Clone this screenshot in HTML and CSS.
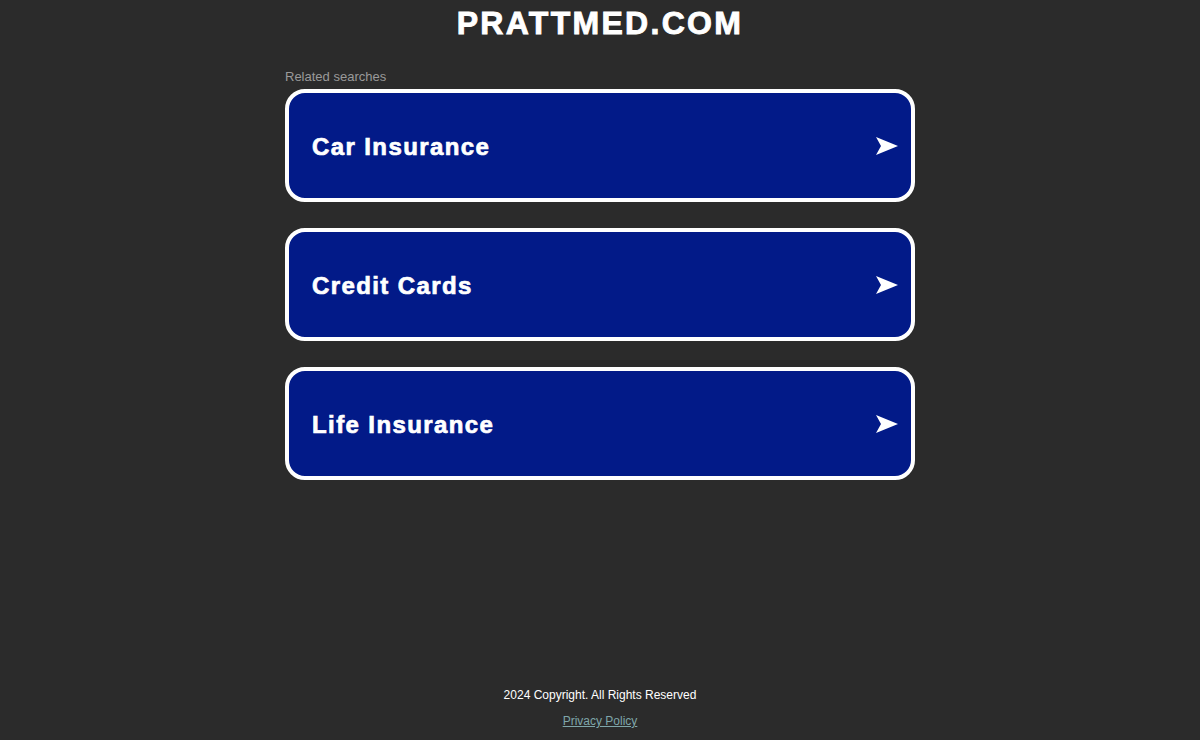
FILE: index.html
```html
<!DOCTYPE html>
<html lang="en">
<head>
<meta charset="utf-8">
<title>PRATTMED.COM</title>
<link rel="stylesheet" href="styles.css">
</head>
<body>
<div class="page">
  <header class="header">
    <h1 class="domain">PRATTMED.COM</h1>
  </header>
  <main class="main">
    <div class="related">Related searches</div>
    <div class="cards">
      <a class="card" href="#"><span class="card-text">Car Insurance</span>
        <svg class="arrow" viewBox="0 0 22 18" width="22" height="18"><polygon points="0,0 22,9 0,18 5,9" fill="#fff"/></svg></a>
      <a class="card" href="#"><span class="card-text">Credit Cards</span>
        <svg class="arrow" viewBox="0 0 22 18" width="22" height="18"><polygon points="0,0 22,9 0,18 5,9" fill="#fff"/></svg></a>
      <a class="card" href="#"><span class="card-text">Life Insurance</span>
        <svg class="arrow" viewBox="0 0 22 18" width="22" height="18"><polygon points="0,0 22,9 0,18 5,9" fill="#fff"/></svg></a>
    </div>
  </main>
  <footer class="footer">
    <div class="copyright">2024 Copyright. All Rights Reserved</div>
    <a class="privacy" href="#">Privacy Policy</a>
  </footer>
</div>
</body>
</html>
```
FILE: styles.css
```css
html, body {
  margin: 0;
  padding: 0;
  background: #2b2b2b;
  font-family: "Liberation Sans", Arial, sans-serif;
}
.page {
  min-height: 100vh;
  display: flex;
  flex-direction: column;
  align-items: center;
}
.header {
  width: 100%;
  text-align: center;
}
.domain {
  margin: 0;
  font-size: 32px;
  line-height: 47px;
  font-weight: 900;
  color: #fff;
  letter-spacing: 2.3px;
  -webkit-text-stroke: 0.9px #fff;
}
.main {
  width: 630px;
  margin-top: 21px;
}
.related {
  font-size: 13px;
  line-height: 17px;
  color: #9a9a9a;
  margin-bottom: 4px;
}
.cards {
  display: flex;
  flex-direction: column;
  gap: 26px;
}
.card {
  display: flex;
  align-items: center;
  justify-content: space-between;
  height: 105px;
  border: 4px solid #fff;
  border-radius: 20px;
  background: #021a88;
  padding: 0 13px 0 23px;
  text-decoration: none;
}
.card-text {
  font-size: 24px;
  font-weight: bold;
  color: #fff;
  letter-spacing: 1.4px;
  -webkit-text-stroke: 0.7px #fff;
  padding-top: 2px;
}
.arrow {
  display: block;
  margin-top: 0;
}
.footer {
  margin-top: auto;
  display: flex;
  flex-direction: column;
  align-items: center;
  padding-bottom: 9px;
}
.copyright {
  font-size: 12px;
  line-height: 20px;
  color: #fff;
  margin-bottom: 6px;
}
.privacy {
  font-size: 12px;
  line-height: 20px;
  color: #7fa6aa;
  text-decoration: underline;
}
```
